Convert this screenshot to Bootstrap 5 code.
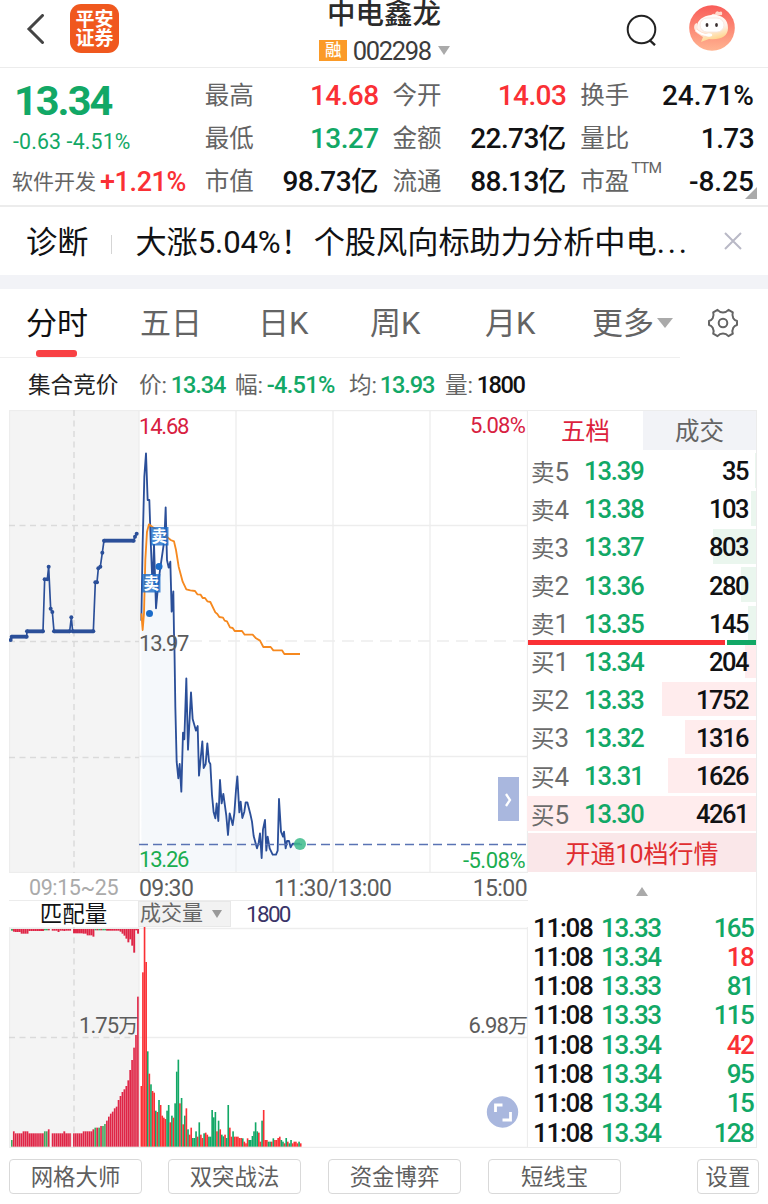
<!DOCTYPE html>
<html lang="zh-CN">
<head>
<meta charset="utf-8">
<meta name="viewport" content="width=device-width, initial-scale=1">
<title>中电鑫龙 002298</title>
<link rel="stylesheet" href="https://cdn.jsdelivr.net/npm/bootstrap@5.3.0/dist/css/bootstrap.min.css">
<style>
:root{--up:#fa3035;--down:#12a866;--ink:#111214;--dim:#646464;--rule:#ececec}
body{font-family:Roboto,"Noto Sans CJK SC",sans-serif;line-height:1;color:var(--ink);background:#fff;width:768px;height:1204px;overflow:hidden}
svg{display:block}
.up{color:var(--up)}.down{color:var(--down)}.dim{color:var(--dim)}
.tri{width:0;height:0;border:6.5px solid transparent;border-top:9px solid #aaa;border-bottom:0}
.topbar{height:68px;border-bottom:1px solid var(--rule)}
.topside{width:300px}
.logo{width:49px;height:49px;border-radius:11px;background:#f0581e;color:#fff;font-size:19px;font-weight:700;line-height:19px}
.stock{font-size:28.5px;line-height:30px;color:#2b2b2b;font-weight:500}
.code{font-size:25.5px;letter-spacing:-1.3px;color:#3c3c3c}
.rong{width:28px;height:21px;background:#fb9a27;color:#fff;font-size:16.5px;font-weight:500;padding-top:1px}
.quote{height:139px;padding:6px 0 4px 12px;border-bottom:2px solid var(--rule)}
.qleft{width:193px}
.qmain{font-size:41.5px;font-weight:700;letter-spacing:-2px;height:48px;padding:6px 0 0 2px}
.qchg{font-size:21.3px;height:37px;padding:9px 0 0 1px;letter-spacing:.15px}
.qsec{font-size:21px;height:43px;padding-top:3px}
.qsec b{font-size:27px;font-weight:500;letter-spacing:-.4px}
.qcol{width:174px;margin-right:14px}
.qcol:last-child{margin-right:0}
.qrow{height:43px;font-size:24.5px}
.qrow>.dim{padding-top:2px}
.num{font-size:28px;font-weight:500;letter-spacing:-.6px}
.num.wide{letter-spacing:0}
.num i{font-style:normal;font-size:27.5px;letter-spacing:0}
.ttm{font-size:15.5px;letter-spacing:-.7px;position:relative;top:-17px;left:2px}
.diag{height:68px;font-size:31.2px;padding:3px 26px 0 26px}
.band{height:14px;background:#f2f3f7}
.tabs{height:68px;font-size:31px;padding-left:26px}
.tabs>div{height:67px;padding-top:1px}
.tabs .active-mark{width:41px;height:7px;border-radius:3px;background:#f84144;bottom:-1px;left:10px}
.tabline{width:680px;height:1px;background:#efefef}
.info{height:52px;font-size:22.6px;padding:4px 0 0 28px}
.info b{font-size:23.6px;font-weight:500;letter-spacing:-1.1px}
.frame{padding:0 11px 0 9px;height:738px}
.chart{width:519px}
.axis{height:27px;font-size:23px;letter-spacing:-.6px;color:#5c5c5c;padding:3px 1px 0 0}
.pick{height:27px;font-size:22.5px;border-top:1px solid var(--rule)}
.pick .sel{width:93px;background:#f2f2f2;color:#666;border:1px solid #e8e8e8}
.side{width:229px;border:solid var(--rule);border-width:1px 1px 1px 0;position:relative}
.sidetabs{height:39px;font-size:24.5px}
.sidetabs>div{padding-top:3px}
.bookrow{height:38.1px;position:relative;padding:6px 8px 0 3px}
.bookrow .depth{position:absolute;right:0;top:3.2px;bottom:.3px;background:#ffeced}
.bookrow.ask .depth{background:#eaf6ee}
.bookrow span{position:relative}
.lvl{font-size:23.5px;color:#6b6b6b;width:53px}
.lvl em{font-style:normal;font-size:26px}
.px{font-size:25.5px;font-weight:500;letter-spacing:-1.1px}
.px.qty{letter-spacing:-1.5px}
.powerbar{height:5px;margin-bottom:-5px;position:relative;z-index:1;gap:2px}
.open10{height:39px;margin-top:2px;padding-top:4px;background:#fae7e9;color:#e02d30;font-size:25px}
.tick{height:29.3px;padding:0 3px 0 5px}
.tick .px{font-size:26px;letter-spacing:-1.3px}
.tick .px.qty{letter-spacing:-1.7px}
.tools{padding:10.5px 9px 0 9px}
.tool{height:35px;width:133px;padding-top:2px;border:1px solid #d9d9d9;border-radius:4px;font-size:22.4px;color:#5f5f5f}
</style>
</head>
<body>
<header class="topbar d-flex justify-content-between">
  <div class="topside d-flex align-items-center" style="padding:0 0 10px 26px">
    <svg width="19" height="30" viewBox="0 0 19 30" fill="none" stroke="#444" stroke-width="3" stroke-linecap="round"><path d="M16.5 1.5 3 15 16.5 28.5"/></svg>
    <div class="logo d-flex flex-column justify-content-center align-items-center" style="margin-left:25px"><span>平安</span><span>证券</span></div>
  </div>
  <div class="d-flex flex-column align-items-center">
    <div class="stock">中电鑫龙</div>
    <div class="d-flex align-items-center" style="margin-top:7.500px;padding-left:1px">
      <span class="rong d-flex align-items-center justify-content-center">融</span>
      <span class="code" style="margin:1px 7px 0 5.500px">002298</span><span class="tri"></span>
    </div>
  </div>
  <div class="topside d-flex align-items-center justify-content-end" style="padding:0 33px 11px 0">
    <svg width="32" height="32" viewBox="0 0 32 32" fill="none" stroke="#222" stroke-width="2" style="margin-top:3px"><circle cx="15.5" cy="15.5" r="13.8"/><path d="m23.5 26 5.5 5.2" stroke-width="2.4"/></svg>
    <svg width="46" height="46" viewBox="0 0 46 46" style="margin-left:31px">
      <defs><linearGradient id="av" x1="0" y1="0" x2="0" y2="1"><stop offset="0" stop-color="#f95c58"/><stop offset="1" stop-color="#ffb491"/></linearGradient>
      <linearGradient id="hd" x1="0" y1="0" x2=".3" y2="1"><stop offset="0" stop-color="#fff"/><stop offset=".6" stop-color="#fff1ea"/><stop offset="1" stop-color="#ffd58b"/></linearGradient></defs>
      <circle cx="23" cy="23" r="22.8" fill="url(#av)"/>
      <path d="M22 11q1-3 4-2 1-4 4-2 4-2 3 3z" fill="#ffd9cc"/>
      <path d="M22 10c10-1 17 4 17 13s-8 12-19 11l-8 3 2-5c-5-3-6-5-6-10C8 15 14 11 22 10z" fill="url(#hd)"/>
      <path d="M8 18c-4 0-4 9 1 9z" fill="#ffe9df"/>
      <rect x="11" y="13" width="24" height="14" rx="7" fill="#fff" stroke="#f6e3dc" stroke-width=".8"/>
      <path d="M7 25q5 5 12 5" fill="none" stroke="#ffd9c9" stroke-width="3.200"/><path d="M7 25q5 5 12 5" fill="none" stroke="#fff" stroke-width="1.800"/><ellipse cx="20" cy="30" rx="3.2" ry="1.700" fill="#fff"/>
      <ellipse cx="18" cy="20" rx="1.4" ry="2" fill="#3a3030"/><ellipse cx="27.500" cy="20" rx="1.4" ry="2" fill="#3a3030"/>
    </svg>
  </div>
</header>

<section class="quote d-flex position-relative">
  <div class="qleft">
    <div class="qmain down">13.34</div>
    <div class="qchg down">-0.63 -4.51%</div>
    <div class="qsec dim d-flex align-items-center">软件开发<b class="up" style="margin-left:4px">+1.21%</b></div>
  </div>
  <div class="qcol">
    <div class="qrow d-flex justify-content-between align-items-center"><span class="dim">最高</span><span class="num up">14.68</span></div>
    <div class="qrow d-flex justify-content-between align-items-center"><span class="dim">最低</span><span class="num down">13.27</span></div>
    <div class="qrow d-flex justify-content-between align-items-center"><span class="dim">市值</span><span class="num">98.73<i>亿</i></span></div>
  </div>
  <div class="qcol">
    <div class="qrow d-flex justify-content-between align-items-center"><span class="dim">今开</span><span class="num up">14.03</span></div>
    <div class="qrow d-flex justify-content-between align-items-center"><span class="dim">金额</span><span class="num">22.73<i>亿</i></span></div>
    <div class="qrow d-flex justify-content-between align-items-center"><span class="dim">流通</span><span class="num">88.13<i>亿</i></span></div>
  </div>
  <div class="qcol">
    <div class="qrow d-flex justify-content-between align-items-center"><span class="dim">换手</span><span class="num wide">24.71%</span></div>
    <div class="qrow d-flex justify-content-between align-items-center"><span class="dim">量比</span><span class="num">1.73</span></div>
    <div class="qrow d-flex justify-content-between align-items-center"><span class="dim">市盈<span class="ttm">TTM</span></span><span class="num wide">-8.25</span></div>
  </div>
  <svg class="position-absolute" style="right:11px;bottom:6px" width="12" height="12"><path d="M12 0v12H0z" fill="#aaa"/></svg>
</section>

<section class="diag d-flex align-items-center">
  <span>诊断</span>
  <span style="width:1px;height:19px;background:#d5d5d5;margin:4px 23px 0 23px"></span>
  <span class="text-nowrap">大涨<span style="letter-spacing:-.2px">5.04%</span>！<span style="margin-left:2px">个股风向标助力分析中电<span style="letter-spacing:2.800px">...</span></span></span>
  <svg class="ms-auto" width="18" height="18" viewBox="0 0 18 18" stroke="#b9b9c6" stroke-width="2" style="margin-bottom:3px"><path d="m1 1 16 16M17 1 1 17"/></svg>
</section>
<div class="band"></div>

<nav class="tabs d-flex align-items-start dim position-relative">
  <div class="d-flex align-items-center position-relative" style="width:114px;color:#111">分时<span class="active-mark position-absolute"></span></div>
  <div class="d-flex align-items-center" style="width:118px">五日</div>
  <div class="d-flex align-items-center" style="width:112px">日K</div>
  <div class="d-flex align-items-center" style="width:115px">周K</div>
  <div class="d-flex align-items-center" style="width:107px">月K</div>
  <div class="d-flex align-items-center">更多<span class="tri" style="border-width:10px 8px 0;margin-left:3px"></span></div>
  <div class="d-flex align-items-center" style="margin-left:35px">
    <svg width="30" height="30" viewBox="0 0 30 30" fill="none" stroke="#646464" stroke-width="2"><path stroke-linejoin="round" d="M9.5 1.8q2.3 2.6 5.5 2.6t5.5-2.6l4.3 2.5q-1 3.2.5 6 1.200 2 3.700 2.700v4q-2.500.7-3.700 2.700-1.500 2.800-.5 6l-4.300 2.500q-2.300-2.600-5.500-2.600t-5.500 2.600l-4.300-2.500q1-3.200-.5-6-1.200-2-3.700-2.700v-4q2.500-.7 3.700-2.700 1.500-2.800.5-6z"/><circle cx="15" cy="15" r="4.300"/></svg>
  </div>
</nav>
<div class="tabline"></div>

<section class="info d-flex align-items-center dim">
  <span style="width:111px;color:#222">集合竞价</span>
  <span style="width:96px">价: <b class="down" style="margin-left:-2px">13.34</b></span>
  <span style="width:114px">幅: <b class="down" style="margin-left:-2px;letter-spacing:-.7px">-4.51%</b></span>
  <span style="width:96px">均: <b class="down" style="margin-left:-3px">13.93</b></span>
  <span>量: <b style="margin-left:-2px;color:#111;letter-spacing:-1.500px">1800</b></span>
</section>

<main class="frame d-flex">
  <div class="chart position-relative">
    <svg width="519" height="463" viewBox="9 410 519 463" font-size="22" letter-spacing="-.9">
      <rect x="9" y="410" width="130" height="463" fill="#f4f4f4"/>
      <g stroke="#ededed" stroke-width="1.300" fill="none">
        <path d="M9.500 410V873M139 410V873M236 410V873M333 410V873M430 410V873M527.500 410V873M9 410.500H528M139 525.500H528M139 756.500H528M9 872.500H528"/>
        <path d="M190 641H528" stroke-dasharray="12 7"/>
      </g>
      <path d="M74 410V873M9 525.500H139M9 641.500H139M9 757.500H139" stroke="#dadada" stroke-width="1.500" stroke-dasharray="6 4.500" fill="none"/>
      <g transform="translate(0 400) scale(.33333)" fill="none" stroke-linejoin="round">
        <polyline id="auction" stroke="#2b4f99" stroke-width="5"/>
        <path id="area" fill="#e6edf5" fill-opacity=".4"/>
        <polyline id="price" stroke="#2b4f99" stroke-width="5.500"/>
        <polyline stroke="#f6891f" stroke-width="5.500" points="424,640 428,690 432,640 436,480 441,395 447,373 456,380 470,390 500,410 512,420 522,424 528,450 536,500 548,545 559,568 571,571 585,573 592,583 602,584 608,594 615,594 622,604 631,606 646,637 652,642 658,651 669,653 674,662 681,664 690,682 698,684 704,693 726,693 734,704 758,704 768,715 780,722 790,741 812,741 820,751 846,751 853,762 900,762"/>
      </g>
      <path d="M139 844.500H528" stroke="#5a73b4" stroke-width="1.500" stroke-dasharray="9 5"/>
      <circle cx="300" cy="844" r="6" fill="#3dbb8b" fill-opacity=".85"/>
      <g fill="#1b6cc9"><rect x="151" y="527" width="17.500" height="18.500" opacity=".8"/><rect x="142" y="574" width="18.500" height="18.500" opacity=".8"/><circle cx="159" cy="566.500" r="3.500"/><circle cx="149.500" cy="613.500" r="3.500"/></g>
      <g fill="#fff" font-size="15.500" font-weight="700" letter-spacing="0"><text x="151.500" y="542">卖</text><text x="143.500" y="589">卖</text></g>
      <g font-weight="450" letter-spacing="-1.200"><text x="139" y="434" fill="#d8203f">14.68</text><text x="139" y="650.500" fill="#5c5c5c">13.97</text><text x="139" y="867" fill="#1aad50">13.26</text>
      <text x="525" y="432.500" text-anchor="end" fill="#d8203f" letter-spacing="-.8">5.08%</text><text x="525" y="868" text-anchor="end" fill="#1aad50" letter-spacing="-.5">-5.08%</text></g>
      <rect x="498" y="777" width="21" height="44" fill="#a9b7de"/><path d="m506 794 4 6-4 6" fill="none" stroke="#fff" stroke-width="2.300"/>
    </svg>
    <div class="axis d-flex align-items-center position-relative">
      <span style="width:130px;padding-left:20px;color:#aaa;font-size:21.500px;letter-spacing:-.4px">09:15~25</span><span style="font-weight:450;width:135px">09:30</span><span style="font-weight:450">11:30/13:00</span><span class="ms-auto" style="font-weight:450">15:00</span>
    </div>
    <div class="pick d-flex">
      <div class="d-flex align-items-center justify-content-center" style="width:129px">匹配量</div>
      <div class="sel d-flex align-items-center" style="padding:0 0 1px 1px;font-size:21px">成交量<span class="tri" style="margin-left:9px;border-width:8px 5.500px 0;border-top-color:#999"></span></div>
      <div class="d-flex align-items-center" style="margin-left:15px;font-weight:450;color:#3a3468;letter-spacing:-1.700px">1800</div>
    </div>
    <svg width="519" height="221" viewBox="9 927 519 221" font-size="22" letter-spacing="-.9">
      <rect x="9" y="927" width="130" height="221" fill="#f4f4f4"/>
      <path d="M9.500 927V1148M139 927V1148M527.500 927V1148M9 928.500H528M139 1037.500H528M9 1147.500H528" stroke="#ededed" stroke-width="1.300"/>
      <path d="M74 927V1148M9 1037.500H139" stroke="#dadada" stroke-width="1.500" stroke-dasharray="6 4.500"/>
      <g id="bars" transform="translate(0 890) scale(.33333)"></g>
      <text x="79" y="1033" fill="#5c5c5c">1.75<tspan font-size="20">万</tspan></text>
      <text x="527" y="1033" fill="#5c5c5c" text-anchor="end">6.98<tspan font-size="20">万</tspan></text>
      <circle cx="502.500" cy="1112" r="15.700" fill="#a9b7de"/>
      <path d="M495.500 1112v-7h7M510.500 1112v8h-8" fill="none" stroke="#fff" stroke-width="2.800"/>
    </svg>
  </div>

  <aside class="side">
    <div class="sidetabs d-flex">
      <div class="d-flex align-items-center justify-content-center" style="width:115px;color:#dc1f3e">五档</div>
      <div class="d-flex align-items-center justify-content-center flex-fill dim" style="background:#f2f3f7">成交</div>
    </div>
    <div id="book"></div>
    <div class="open10 d-flex align-items-center justify-content-center">开通10档行情</div>
    <div class="d-flex justify-content-center" style="height:41px;padding-top:15px"><svg width="12" height="9"><path d="M6 0 12 9H0z" fill="#aaa"/></svg></div>
    <div id="ticks"></div>
  </aside>
</main>

<footer class="tools d-flex">
  <div class="tool d-flex align-items-center justify-content-center">网格大师</div>
  <div class="tool d-flex align-items-center justify-content-center" style="margin-left:26px">双突战法</div>
  <div class="tool d-flex align-items-center justify-content-center" style="margin-left:27px">资金博弈</div>
  <div class="tool d-flex align-items-center justify-content-center" style="margin-left:27px">短线宝</div>
  <div class="tool d-flex align-items-center justify-content-center ms-auto" style="width:62px">设置</div>
</footer>

<script src="https://cdn.jsdelivr.net/npm/bootstrap@5.3.0/dist/js/bootstrap.bundle.min.js"></script>
<script>
const $ = id => document.getElementById(id);

// opening auction, one sample per dot
const auction = [[32,720],[35,710],[80,710],[81,694],[129,694],[134,538],[142,538],[146,500],[152,626],[157,636],[162,694],[209,694],[214,652],[218,694],[280,694],[286,547],[291,547],[295,505],[301,500],[307,458],[312,422],[401,422],[405,410],[410,401]];
$('auction').setAttribute('points', auction.join(' '));
let dots = auction.map(p => `<circle cx="${p[0]}" cy="${p[1]}" r="6" fill="#2b4f99"/>`).join('');
[[35,80,710],[81,130,694],[162,209,694],[218,280,694],[312,401,422]].forEach(s => dots += `<path d="M${s[0]} ${s[2]}H${s[1]}" stroke="#2b4f99" stroke-width="11.500"/>`);
$('auction').insertAdjacentHTML('afterend', dots);

// minute prices
const open = [[424,662],[428,430],[433,230],[438,160],[443,300],[448,300],[452,420],[456,520],[458,560],[462,430],[468,625],[474,560],[480,510],[488,455],[493,420],[497,322],[501,480],[506,503],[511,485],[515,635],[520,574],[522,700]];
const later = [[163,0],[166,200],[170,365],[175,415],[179,372],[184,455],[189,278],[193,298],[199,115],[204,329],[213,157],[218,237],[228,272],[233,258],[237,407],[247,304],[251,384],[257,372],[262,310],[267,365],[271,372],[276,465],[281,517],[286,535],[290,490],[295,543],[300,420],[305,490],[310,462],[319,528],[324,585],[329,520],[338,555],[343,520],[348,450],[352,409],[358,517],[362,485],[367,534],[373,515],[377,487],[382,487],[391,522],[396,545],[401,588],[411,625],[416,608],[420,580],[425,654],[429,568],[435,540],[439,632],[443,590],[449,625],[458,644],[468,644],[473,632],[477,477],[483,575],[489,590],[492,575],[497,625],[501,603],[507,603],[512,622],[518,611],[540,611]];
const price = open.concat(later.map(p => [p[0]+360, p[1]+720]));
$('price').setAttribute('points', price.join(' '));
$('area').setAttribute('d', 'M424 1414L' + price.join(' ') + ' 900 1414Z');

// volume bars: colour + height
let bars = '';
const bar = (x, y, w, h, c) => bars += `<rect x="${x}" y="${y}" width="${w}" height="${h}" fill="${c}"/>`;
const vol = 'r182 r523 r659 r554 g286 r219 g187 r167 r162 g108 r104 g140 r125 r93 r87 r83 g108 g125 r73 g93 r87 g130 g225 g261 r130 g146 r67 g93 r115 g52 r36 r57 g26 g26 g46 r30 g73 r36 r26 g40 r42 r36 g30 g30 g110 g88 g104 r46 g78 r52 g36 g31 r36 g26 g125 r57 r30 g46 r30 r30 r30 r26 r26 g25 r15 r10 r25 g20 g20 g32 g46 g73 g46 r42 r15 g78 r110 r20 r20 g15 g15 r15 g25 r20 r20 r26 r30 g20 g15 r10 g26 r15 g10 g20 r10 r15 r15 r10 g15 r10'.split(' ');
vol.forEach((v, i) => { const h = +v.slice(1); bar((421.5 + i*4.83).toFixed(1), 770-h, 4.9, h, v[0]==='r' ? '#fa3035' : '#12a866'); });
// matched volume: [until x, top, hanging depth, green]
const m = [[38,750,5,1],[43,724,8],[60,730,9],[65,730,14],[84,724,14],[133,730,6],[146,724,4,1],[151,718,4],[154,770,0],[175,730,5],[181,730,9],[192,730,5],[198,724,6],[215,730,5],[219,770,0],[250,730,13],[262,724,14],[275,724,19],[280,718,19],[285,718,23],[289,713,4,1],[295,713,4],[300,713,4,1],[306,708,4],[311,708,4,1],[314,706,4],[319,702,4,1],[324,692,5],[329,680,5],[335,671,5],[341,665,5],[346,655,5],[352,650,5],[358,630,5],[364,618,8],[370,606,14],[375,598,20],[381,588,29],[387,571,40],[393,540,31],[398,510,50],[404,473,71],[409,435,4],[415,320,14]];
let k = 0;
for (let x = 33; x < 414; x += 5.82) {
  while (m[k] && x + 2.9 > m[k][0]) k++;
  const s = m[k] || m[m.length-1];
  if (s[1] >= 770) continue;
  const c = s[3] ? '#3aaf62' : '#df2546';
  bar(x.toFixed(1), s[1], 5, 770-s[1], c);
  bar((x+4.9).toFixed(1), s[1], 1, 770-s[1], '#e87a8c');
  bar(x.toFixed(1), 117, 5.8, s[2], c);
}
$('bars').innerHTML = bars;

// order book: side, level, price, volume, depth width
const book = [['卖','5','13.39',35,1],['卖','4','13.38',103,5],['卖','3','13.37',803,43],['卖','2','13.36',280,15],['卖','1','13.35',145,8],['买','1','13.34',204,11],['买','2','13.33',1752,94],['买','3','13.32',1316,71],['买','4','13.31',1626,88],['买','5','13.30',4261,229]];
$('book').innerHTML = book.map((r, i) => (i===5 ? '<div class="powerbar d-flex"><div style="width:197px;background:#fa3035"></div><div class="flex-fill" style="background:#12a866"></div></div>' : '') +
 `<div class="bookrow d-flex align-items-center ${i<5?'ask':''}"><div class="depth" style="width:${r[4]}px"></div><span class="lvl">${r[0]}<em>${r[1]}</em></span><span class="px down">${r[2]}</span><span class="px qty ms-auto">${r[3]}</span></div>`).join('');

const ticks = [['13.33',165],['13.34',18,1],['13.33',81],['13.33',115],['13.34',42,1],['13.34',95],['13.34',15],['13.34',128]];
$('ticks').innerHTML = ticks.map(t => `<div class="tick d-flex align-items-center"><span class="px" style="width:68px">11:08</span><span class="px down">${t[0]}</span><span class="px qty ms-auto ${t[2]?'up':'down'}">${t[1]}</span></div>`).join('');
</script>
</body>
</html>
